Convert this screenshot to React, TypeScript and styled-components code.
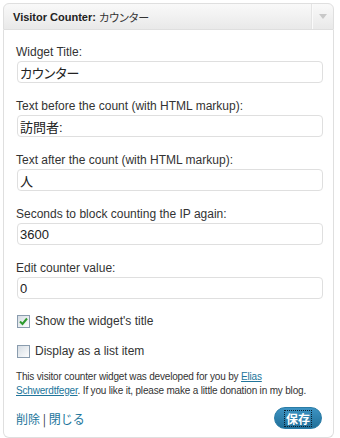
import React from 'react'
import styled, { createGlobalStyle } from 'styled-components'

const GlobalStyle = createGlobalStyle`
  html, body {
    margin: 0;
    padding: 0;
    background: #fff;
  }
  body {
    font-family: 'Liberation Sans', Arial, 'Noto Sans CJK JP', sans-serif;
    color: #333;
  }
`

const Page = styled.div`
  padding: 3px 0 0 3px;
`

const Widget = styled.div`
  width: 331px;
`

const WidgetTop = styled.div`
  display: flex;
  align-items: stretch;
  height: 27px;
  box-sizing: border-box;
  border: 1px solid #dfdfdf;
  border-radius: 6px 6px 0 0;
  background: linear-gradient(#f9f9f9, #e9e9e9);
`

const WidgetTitle = styled.h4`
  flex: 1;
  margin: 0;
  padding-left: 9px;
  display: flex;
  align-items: center;
  font-size: 11px;
  font-weight: bold;
  color: #222;

  span {
    font-weight: normal;
    font-family: 'Noto Sans CJK JP', sans-serif;
    font-feature-settings: 'palt';
    margin-left: 3px;
    color: #333;
  }
`

const Toggle = styled.div`
  width: 21px;
  border-left: 1px solid #e4e4e4;
  box-shadow: inset 1px 0 0 #fafafa;
  display: flex;
  align-items: center;
  justify-content: center;

  &::after {
    content: '';
    border-left: 4px solid transparent;
    border-right: 4px solid transparent;
    border-top: 5px solid #c8c8c8;
  }
`

const WidgetInside = styled.div`
  border: 1px solid #dfdfdf;
  border-top: none;
  border-radius: 0 0 6px 6px;
  padding: 15px 10px 8px 12px;
`

const Field = styled.p`
  margin: 0 0 16px;
`

const Label = styled.label`
  display: block;
  font-size: 12px;
  line-height: 15px;
  margin-bottom: 1px;
  color: #333;
`

const TextInput = styled.input`
  display: block;
  box-sizing: border-box;
  width: 306px;
  height: 22px;
  margin: 0 0 0 1px;
  padding: 0 2px;
  border: 1px solid #dfdfdf;
  border-radius: 4px;
  background: #fff;
  font-family: 'Liberation Sans', Arial, 'Noto Sans CJK JP', sans-serif;
  font-feature-settings: 'palt';
  font-size: 13px;
  color: #222;
  outline: none;
`

const CheckRow = styled.label<{ $first?: boolean }>`
  display: flex;
  align-items: center;
  height: 16px;
  margin: ${(p) => (p.$first ? '-2px' : '14px')} 0 0 1px;
  font-size: 12px;
  color: #333;
`

const Box = styled.span`
  width: 13px;
  height: 13px;
  box-sizing: border-box;
  border: 1px solid #8a9cae;
  background: linear-gradient(135deg, #d6dde4, #fdfdfd);
  margin-right: 5px;
  display: flex;
  align-items: center;
  justify-content: center;
`

const Note = styled.p`
  margin: 11px 0 0;
  font-size: 10px;
  line-height: 13.5px;
  letter-spacing: -0.18px;
  color: #333;
`

const Link = styled.a`
  color: #21759b;
  text-decoration: underline;
`

const Footer = styled.div`
  display: flex;
  align-items: center;
  justify-content: space-between;
  margin-top: 10px;
  padding-right: 1px;
`

const Controls = styled.div`
  font-size: 12px;
  font-family: 'Noto Sans CJK JP', sans-serif;
  color: #333;

  a {
    color: #21759b;
    text-decoration: none;
  }
`

const SaveButton = styled.button`
  width: 48px;
  height: 22px;
  border-radius: 11px;
  border: 1px solid #2a7ca6;
  background: linear-gradient(#3d93c3, #1f6f98);
  color: #fff;
  font-family: 'Noto Sans CJK JP', sans-serif;
  font-weight: bold;
  font-size: 12px;
  padding: 0;
  display: flex;
  align-items: center;
  justify-content: center;

  span {
    border: 1px dotted #0a2030;
    padding: 0 1px;
    line-height: 15px;
  }
`

const Check = () => (
  <svg width="9" height="9" viewBox="0 0 9 9">
    <path d="M1 4.5 L3.5 7 L8 1.5" stroke="#2e9a2e" strokeWidth="2" fill="none" />
  </svg>
)

const fields = [
  { label: 'Widget Title:', value: 'カウンター' },
  { label: 'Text before the count (with HTML markup):', value: '訪問者:' },
  { label: 'Text after the count (with HTML markup):', value: '人' },
  { label: 'Seconds to block counting the IP again:', value: '3600' },
  { label: 'Edit counter value:', value: '0' },
]

export default function App() {
  return (
    <Page>
      <GlobalStyle />
      <Widget>
        <WidgetTop>
          <WidgetTitle>
            Visitor Counter:<span>カウンター</span>
          </WidgetTitle>
          <Toggle />
        </WidgetTop>
        <WidgetInside>
          {fields.map((f) => (
            <Field key={f.label}>
              <Label>{f.label}</Label>
              <TextInput defaultValue={f.value} />
            </Field>
          ))}
          <CheckRow $first>
            <Box>
              <Check />
            </Box>
            Show the widget's title
          </CheckRow>
          <CheckRow>
            <Box />
            Display as a list item
          </CheckRow>
          <Note>
            This visitor counter widget was developed for you by <Link href="#">Elias</Link>
            <br />
            <Link href="#">Schwerdtfeger</Link>. If you like it, please make a little donation in my blog.
          </Note>
          <Footer>
            <Controls>
              <a href="#">削除</a> | <a href="#">閉じる</a>
            </Controls>
            <SaveButton>
              <span>保存</span>
            </SaveButton>
          </Footer>
        </WidgetInside>
      </Widget>
    </Page>
  )
}
